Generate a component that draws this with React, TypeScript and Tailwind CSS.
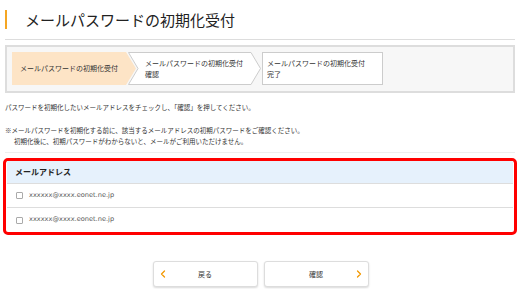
import { ChevronLeft, ChevronRight } from 'lucide-react'

const JP = { fontFamily: '"Noto Sans CJK JP", "Noto Sans", sans-serif' }

const EMAILS = ['xxxxxx@xxxx.eonet.ne.jp', 'xxxxxx@xxxx.eonet.ne.jp']

export default function App() {
  return (
    <div className="h-[289px] w-[520px] overflow-hidden bg-white text-[#333]" style={JP}>
      {/* Title */}
      <div className="mx-[5px] flex h-[40px] items-center border-b border-[#dddddd] pb-[1px]">
        <div className="h-[19px] w-[2px] bg-[#f5a623]" />
        <h1 className="ml-[18px] text-[15px] leading-none text-[#222]">メールパスワードの初期化受付</h1>
      </div>

      {/* Steps */}
      <div className="mx-[5px] mt-[5px] flex h-[48px] border-2 border-[#dddddd] bg-[#f7f7f7] px-[5px] py-[5px]">
        <div className="relative flex h-[33px] w-[124px] shrink-0 items-center pl-[8px] text-[7px] leading-[11px]">
          <svg className="absolute inset-0" width="124" height="33" viewBox="0 0 124 33">
            <polygon points="0,0 114,0 124,16.5 114,33 0,33" fill="#fde4c6" />
          </svg>
          <span className="relative">メールパスワードの初期化受付</span>
        </div>
        <div className="relative -ml-[8px] flex h-[33px] w-[133px] shrink-0 items-center pl-[17px] text-[7px] leading-[11px]">
          <svg className="absolute inset-0" width="133" height="33" viewBox="0 0 133 33">
            <polygon points="0.5,0.5 123,0.5 132.5,16.5 123,32.5 0.5,32.5 10,16.5" fill="#fff" stroke="#cccccc" />
          </svg>
          <span className="relative">
            メールパスワードの初期化受付
            <br />
            確認
          </span>
        </div>
        <div className="ml-[1px] flex h-[33px] w-[121px] shrink-0 items-center border border-[#cccccc] bg-white pl-[4px] text-[7px] leading-[11px]">
          <span>
            メールパスワードの初期化受付
            <br />
            完了
          </span>
        </div>
      </div>

      {/* Messages */}
      <p className="mx-[5px] mt-[9px] text-[6.5px] leading-[10px]">
        パスワードを初期化したいメールアドレスをチェックし、「確認」を押してください。
      </p>
      <div className="mx-[5px] mt-[13px] text-[6.5px] leading-[11px]">
        <p>※メールパスワードを初期化する前に、該当するメールアドレスの初期パスワードをご確認ください。</p>
        <p className="pl-[9px]">初期化後に、初期パスワードがわからないと、メールがご利用いただけません。</p>
      </div>

      <div className="mx-[5px] mt-[5px] border-t border-[#eeeeee]" />

      {/* Address table */}
      <div className="mx-[3px] mt-[5px] rounded-[5px] border-[3px] border-[#ff0000] px-[1px]">
        <div className="flex h-[23px] items-center border-b border-[#dddddd] bg-[#e6f1fc] pl-[8px] text-[8px] font-bold text-[#222]">
          メールアドレス
        </div>
        {EMAILS.map((mail, i) => (
          <label
            key={i}
            className={`flex h-[24px] items-center pl-[9px] ${i === 0 ? 'border-b border-[#dddddd]' : ''}`}
          >
            <span className="h-[7px] w-[7px] rounded-[1px] border border-[#aaaaaa] bg-white" />
            <span className="ml-[6px] text-[6.6px] text-[#555555]" style={{ fontFamily: '"DejaVu Sans", sans-serif' }}>
              {mail}
            </span>
          </label>
        ))}
      </div>

      {/* Buttons */}
      <div className="mt-[26px] flex justify-center gap-[6px] pl-[1px]">
        <button className="relative flex h-[26px] w-[105px] items-center justify-center rounded-[3px] border border-[#dddddd] bg-white text-[7px] shadow-[0_1px_2px_rgba(0,0,0,0.15)]">
          <ChevronLeft className="absolute left-[3px] text-[#f39800]" size={12} strokeWidth={2.5} />
          戻る
        </button>
        <button className="relative flex h-[26px] w-[105px] items-center justify-center rounded-[3px] border border-[#dddddd] bg-white text-[7px] shadow-[0_1px_2px_rgba(0,0,0,0.15)]">
          確認
          <ChevronRight className="absolute right-[3px] text-[#f39800]" size={12} strokeWidth={2.5} />
        </button>
      </div>
    </div>
  )
}
